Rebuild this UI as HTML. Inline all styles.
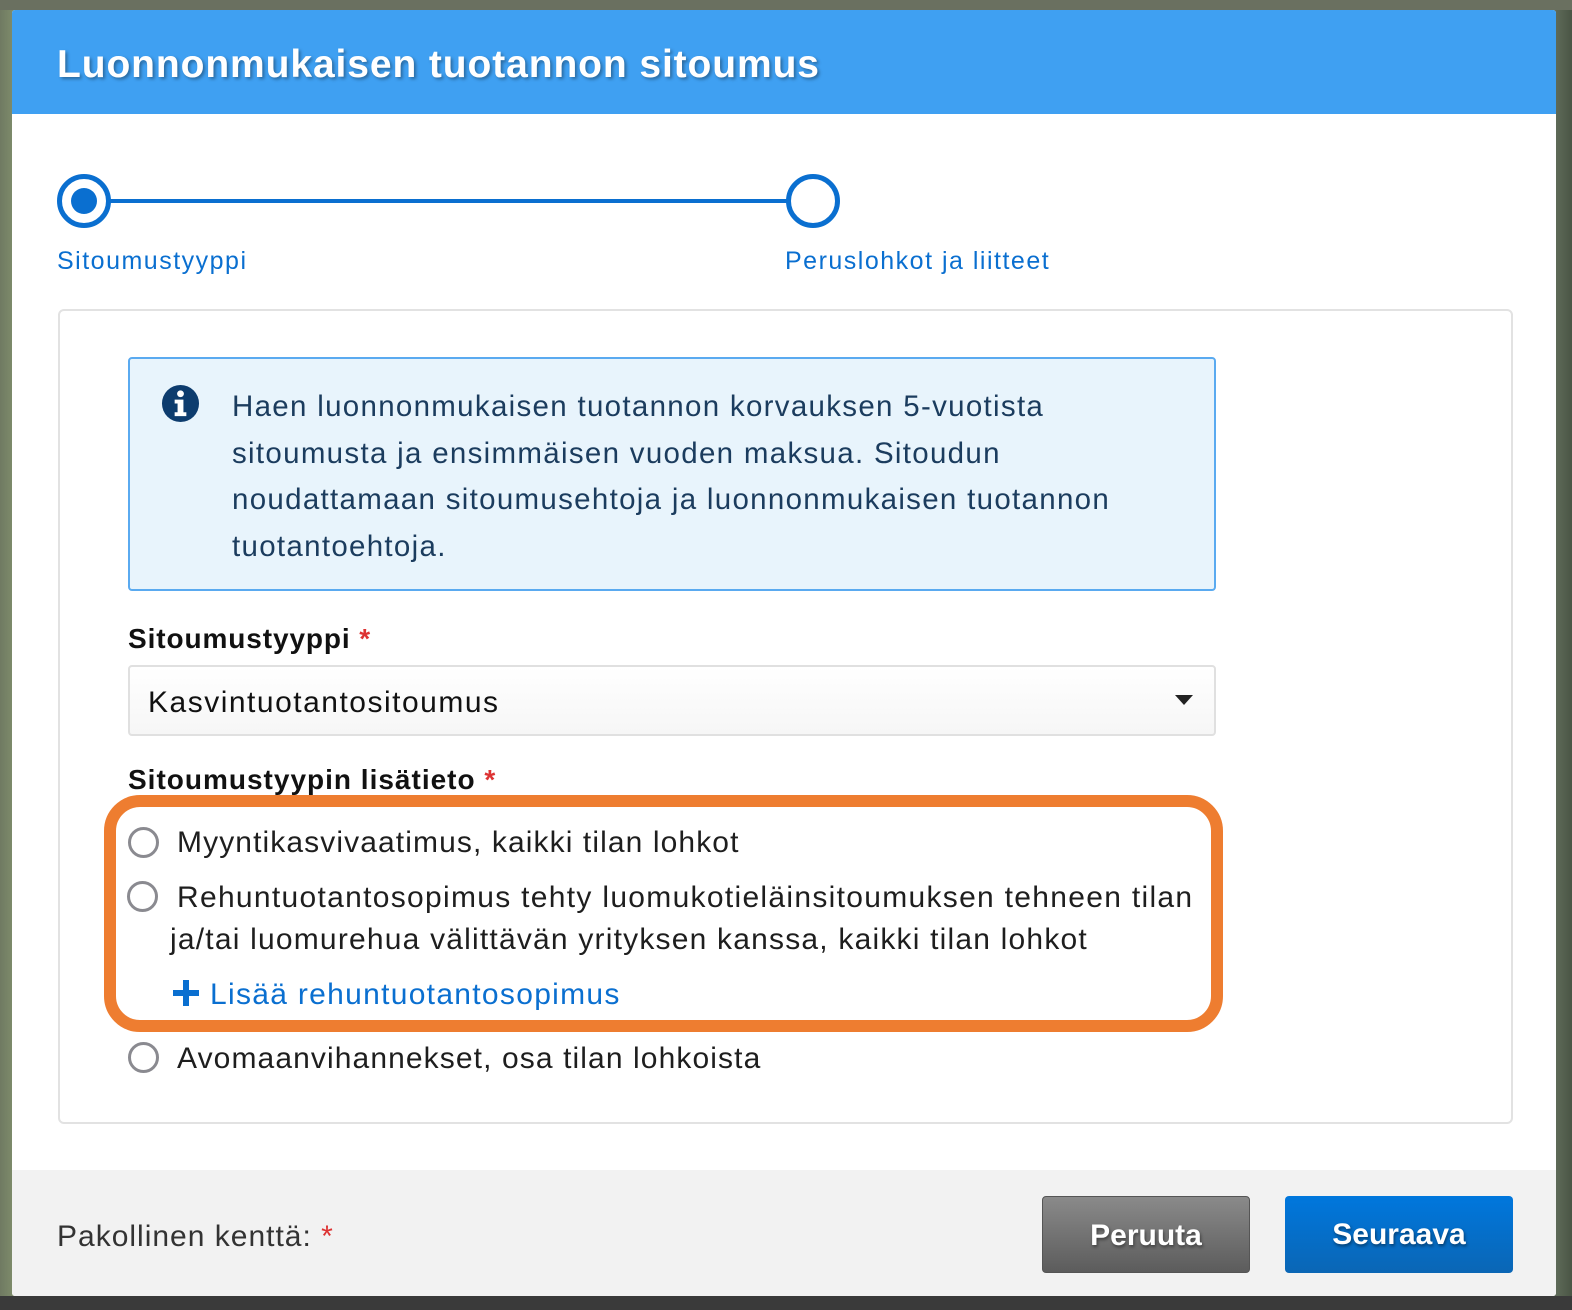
<!DOCTYPE html>
<html><head><meta charset="utf-8"><style>
*{margin:0;padding:0;box-sizing:border-box}
body{width:1572px;height:1310px;position:relative;overflow:hidden;background:linear-gradient(90deg,#6f7a62 0,#7d8a6a 12px,#5e6a58 1556px,#4a5545 1572px);font-family:"Liberation Sans",sans-serif}
.a{position:absolute;white-space:nowrap}
#bot{left:0;top:1296px;width:1572px;height:14px;background:#3a3a3a}
#top{left:0;top:0;width:1572px;height:10px;background:#6a7060}
#dlg{left:12px;top:10px;width:1544px;height:1286px;background:#fff;border-radius:3px;overflow:hidden}
#hd{left:0;top:0;width:1544px;height:104px;background:#3fa0f2}
#title{left:45px;top:33px;font-size:39px;font-weight:bold;color:#fff;text-shadow:2px 2px 3px rgba(0,0,0,.35);letter-spacing:0.9px}
.lbl{font-size:25px;color:#0a6fd0;letter-spacing:1.5px}
#ft{left:0;top:1160px;width:1544px;height:126px;background:#f2f2f2}
.btn{height:77px;border-radius:4px;color:#fff;font-weight:bold;font-size:30px;text-align:center;line-height:77px;text-shadow:1px 2px 3px rgba(0,0,0,.45)}
.radio{width:31px;height:31px;border:3px solid #8a8a90;border-radius:50%;background:#fff}
.t{font-size:30px;color:#1e1e1e;letter-spacing:1.1px}
.info{font-size:29.5px;color:#1b3c5e;letter-spacing:1.3px}
</style></head><body>
<div class="a" id="top"></div>
<div class="a" id="bot"></div>
<div class="a" id="dlg">
 <div class="a" id="hd"></div>
 <div class="a" id="title">Luonnonmukaisen tuotannon sitoumus</div>
 <div class="a" id="ft"></div>
</div>
<!-- stepper -->
<div class="a" style="left:108px;top:199px;width:682px;height:4px;background:#0a6fd0"></div>
<div class="a" style="left:57px;top:174px;width:54px;height:54px;border:5px solid #0a6fd0;border-radius:50%;background:#fff"></div>
<div class="a" style="left:71px;top:188px;width:26px;height:26px;border-radius:50%;background:#0a6fd0"></div>
<div class="a" style="left:786px;top:174px;width:54px;height:54px;border:5px solid #0a6fd0;border-radius:50%;background:#fff"></div>
<div class="a lbl" style="left:57px;top:247px">Sitoumustyyppi</div>
<div class="a lbl" style="left:785px;top:247px">Peruslohkot ja liitteet</div>
<!-- panel -->
<div class="a" style="left:58px;top:309px;width:1455px;height:815px;border:2px solid #e2e2e2;border-radius:6px"></div>
<div class="a" style="left:128px;top:357px;width:1088px;height:234px;background:#e8f4fc;border:2px solid #5aaaf0;border-radius:4px"></div>
<svg class="a" style="left:161px;top:384px" width="39" height="39" viewBox="0 0 40 40"><circle cx="20" cy="20" r="19" fill="#0d3c6e"/><circle cx="20" cy="10" r="3.5" fill="#fff"/><path d="M14 16h9v13h3v4H14v-4h3v-9h-3z" fill="#fff"/></svg>
<div class="a info" style="left:232px;top:390px">Haen luonnonmukaisen tuotannon korvauksen 5-vuotista</div>
<div class="a info" style="left:232px;top:437px">sitoumusta ja ensimmäisen vuoden maksua. Sitoudun</div>
<div class="a info" style="left:232px;top:483px">noudattamaan sitoumusehtoja ja luonnonmukaisen tuotannon</div>
<div class="a info" style="left:232px;top:530px">tuotantoehtoja.</div>
<div class="a t" style="left:128px;top:623px;font-weight:bold;font-size:28px;color:#111;letter-spacing:0.9px">Sitoumustyyppi <span style="color:#d33">*</span></div>
<div class="a" style="left:128px;top:665px;width:1088px;height:71px;border:2px solid #e0e0e0;border-radius:4px;background:linear-gradient(#fff,#f6f6f6)"></div>
<div class="a t" style="left:148px;top:686px;color:#111;letter-spacing:1.5px">Kasvintuotantositoumus</div>
<div class="a" style="left:1175px;top:695px;width:0;height:0;border-left:9px solid transparent;border-right:9px solid transparent;border-top:10px solid #222"></div>
<div class="a t" style="left:128px;top:764px;font-weight:bold;font-size:28px;color:#111;letter-spacing:1px">Sitoumustyypin lisätieto <span style="color:#d33">*</span></div>
<div class="a" style="left:104px;top:795px;width:1119px;height:237px;border:12px solid #ee7d30;border-radius:36px"></div>
<div class="a radio" style="left:128px;top:827px"></div>
<div class="a t" style="left:177px;top:826px">Myyntikasvivaatimus, kaikki tilan lohkot</div>
<div class="a radio" style="left:127px;top:881px"></div>
<div class="a t" style="left:177px;top:881px;letter-spacing:1.3px">Rehuntuotantosopimus tehty luomukotieläinsitoumuksen tehneen tilan</div>
<div class="a t" style="left:170px;top:923px;letter-spacing:1.2px">ja/tai luomurehua välittävän yrityksen kanssa, kaikki tilan lohkot</div>
<div class="a" style="left:173px;top:990px;width:26px;height:6px;background:#0a6fd0"></div>
<div class="a" style="left:183px;top:980px;width:6px;height:26px;background:#0a6fd0"></div>
<div class="a t" style="left:210px;top:978px;color:#0a6fd0;letter-spacing:1.3px">Lisää rehuntuotantosopimus</div>
<div class="a radio" style="left:128px;top:1042px"></div>
<div class="a t" style="left:177px;top:1042px">Avomaanvihannekset, osa tilan lohkoista</div>
<!-- footer -->
<div class="a t" style="left:57px;top:1220px;color:#333;letter-spacing:1px">Pakollinen kenttä: <span style="color:#d33">*</span></div>
<div class="a btn" style="left:1042px;top:1196px;width:208px;background:linear-gradient(#8a8a8a,#5c5c5c);border:1px solid #555">Peruuta</div>
<div class="a btn" style="left:1285px;top:1196px;width:228px;background:linear-gradient(#0077dd,#0a66b5)">Seuraava</div>
</body></html>
